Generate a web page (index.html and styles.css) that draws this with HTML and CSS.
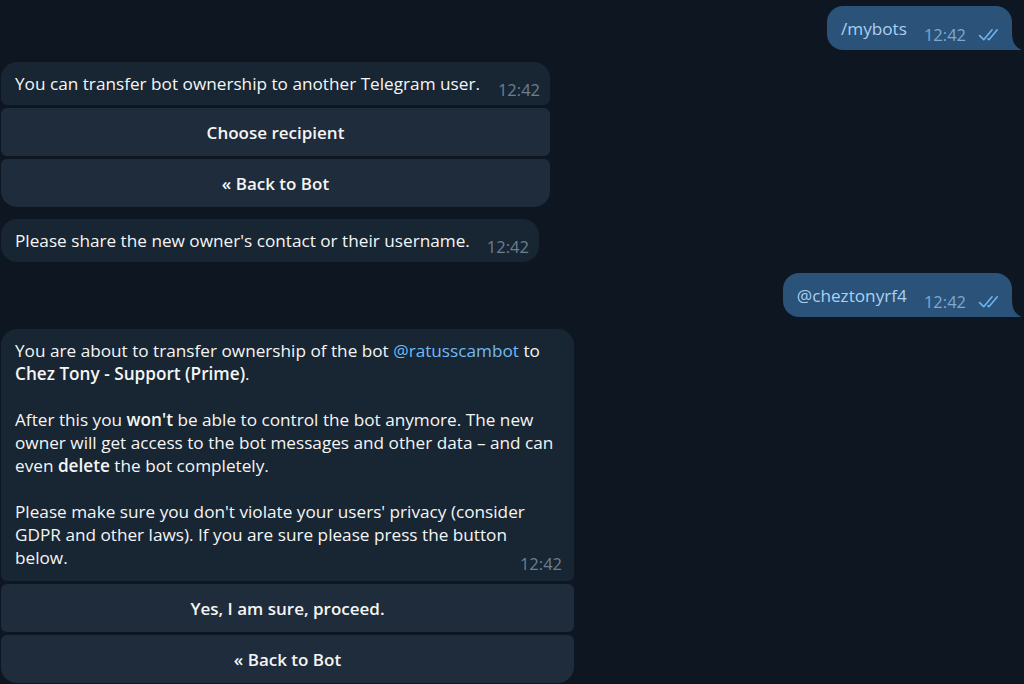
FILE: index.html
```html
<!DOCTYPE html>
<html>
<head>
<meta charset="utf-8">
<link rel="stylesheet" href="styles.css">
</head>
<body>
<div class="chat">
  <div class="row out first">
    <div class="bubble outb">
      <span class="cmd">/mybots</span><span class="time">12:42<svg class="check" viewBox="0 0 24 14" width="25" height="15"><path d="M1.5 8 L5.5 12 L13.5 2.5" fill="none" stroke="#6ab2f2" stroke-width="1.6" stroke-linecap="round" stroke-linejoin="round"/><path d="M9.5 11.2 L10.5 12 L18.5 2.5" fill="none" stroke="#6ab2f2" stroke-width="1.6" stroke-linecap="round" stroke-linejoin="round"/></svg></span>
      <svg class="tail" viewBox="0 0 10 18" width="10" height="18"><path d="M0 0 C0 10 3 15 10 18 L0 18 Z" fill="#2b5278"/></svg>
    </div>
  </div>

  <div class="group gap">
    <div class="bubble inb kb">You can transfer bot ownership to another Telegram user.<span class="time">12:42</span></div>
    <div class="btn">Choose recipient</div>
    <div class="btn last">« Back to Bot</div>
  </div>

  <div class="row gap">
    <div class="bubble inb">Please share the new owner's contact or their username.<span class="time">12:42</span></div>
  </div>

  <div class="row out gap">
    <div class="bubble outb">
      <span class="cmd">@cheztonyrf4</span><span class="time">12:42<svg class="check" viewBox="0 0 24 14" width="25" height="15"><path d="M1.5 8 L5.5 12 L13.5 2.5" fill="none" stroke="#6ab2f2" stroke-width="1.6" stroke-linecap="round" stroke-linejoin="round"/><path d="M9.5 11.2 L10.5 12 L18.5 2.5" fill="none" stroke="#6ab2f2" stroke-width="1.6" stroke-linecap="round" stroke-linejoin="round"/></svg></span>
      <svg class="tail" viewBox="0 0 10 18" width="10" height="18"><path d="M0 0 C0 10 3 15 10 18 L0 18 Z" fill="#2b5278"/></svg>
    </div>
  </div>

  <div class="group gap wide">
    <div class="bubble inb kb long">You are about to transfer ownership of the bot <span class="link">@ratusscambot</span> to <b>Chez Tony - Support (Prime)</b>.<br><br>After this you <b>won't</b> be able to control the bot anymore. The new owner will get access to the bot messages and other data – and can even <b>delete</b> the bot completely.<br><br>Please make sure you don't violate your users' privacy (consider GDPR and other laws). If you are sure please press the button below.<span class="time">12:42</span></div>
    <div class="btn">Yes, I am sure, proceed.</div>
    <div class="btn last">« Back to Bot</div>
  </div>
</div>
</body>
</html>
```

FILE: styles.css
```css
html, body {
  margin: 0;
  padding: 0;
  background: #0e1621;
  height: 100%;
  overflow: hidden;
}
body {
  font-family: "Open Sans", "Noto Sans", sans-serif;
  font-size: 17.2px;
  color: #f5f5f5;
}
.chat {
  display: flex;
  flex-direction: column;
  padding-left: 1px;
}
.row {
  display: flex;
}
.row.out {
  justify-content: flex-end;
  padding-right: 12px;
}
.row.first {
  margin-top: 6px;
}
.gap {
  margin-top: 12px;
}
.gap.out {
  margin-top: 11px;
}
.group {
  display: flex;
  flex-direction: column;
  gap: 3px;
  width: 549px;
}
.group.wide {
  width: 573px;
}
.bubble {
  position: relative;
  line-height: 23px;
  padding: 10px 10px 10px 14px;
  border-radius: 16px;
}
.bubble::after {
  content: "";
  display: block;
  clear: both;
}
.inb {
  background: #182533;
}
.inb.kb {
  border-radius: 16px 16px 6px 6px;
}
.long {
  padding-right: 16px;
  padding-bottom: 12px;
}
.long .time {
  margin-right: -4px;
}
.outb {
  background: #2b5278;
  border-radius: 16px 16px 0 16px;
  padding-right: 9px;
  padding-top: 11px;
}
.cmd {
  color: #a9d0f5;
}
.link {
  color: #71baf5;
}
b {
  font-weight: 600;
}
.time {
  float: right;
  margin-left: 17px;
  margin-top: 6px;
  margin-bottom: -6px;
  font-size: 16.5px;
  line-height: 23px;
  height: 23px;
  color: #6d7f8f;
  display: flex;
  align-items: center;
}
.outb .time {
  color: #7da8d3;
}
.check {
  margin-left: 12px;
}
.tail {
  position: absolute;
  right: -10px;
  bottom: 0;
}
.btn {
  background: #1f2c3b;
  height: 48px;
  display: flex;
  align-items: center;
  justify-content: center;
  font-weight: 600;
  font-size: 17px;
  color: #f5f5f5;
  border-radius: 6px;
}
.btn.last {
  border-radius: 6px 6px 16px 16px;
}
```
